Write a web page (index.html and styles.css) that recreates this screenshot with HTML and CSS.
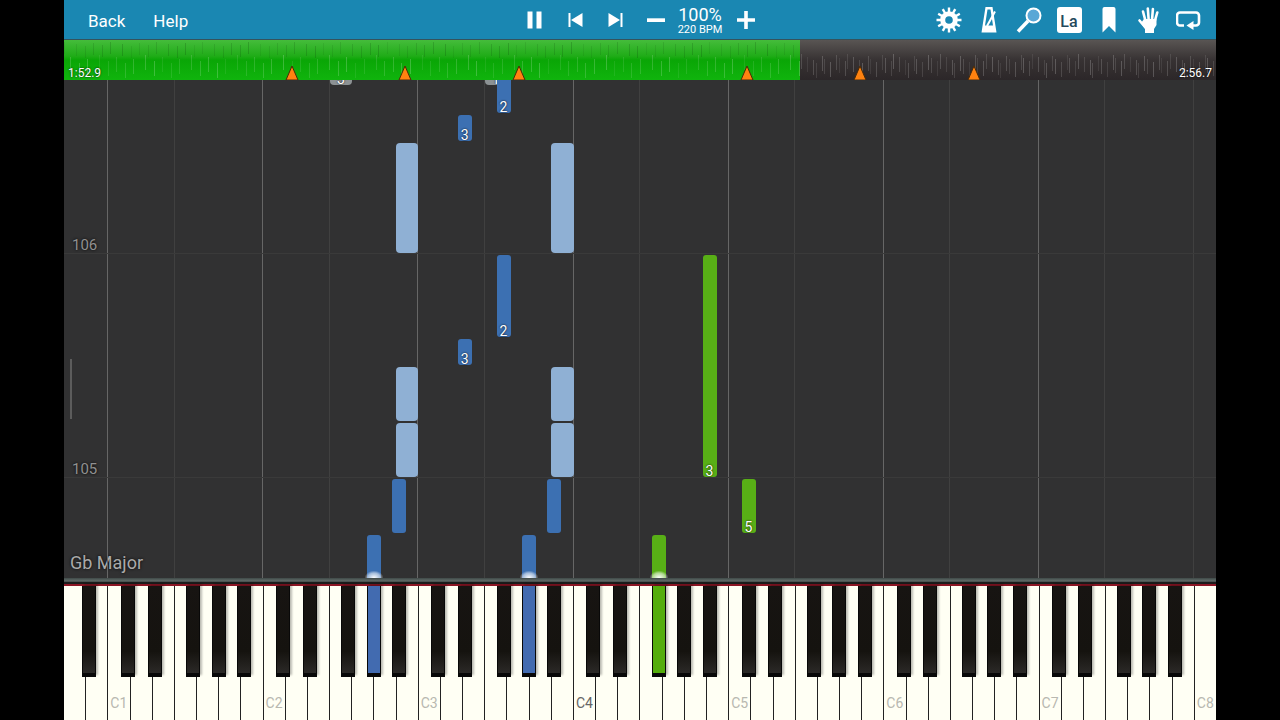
FILE: index.html
```html
<!DOCTYPE html>
<html lang="en">
<head>
  <meta charset="UTF-8">
  <meta name="viewport" content="width=device-width, initial-scale=1.0">
  <title>Piano Player</title>
  <link rel="stylesheet" href="styles.css">
</head>
<body>

<main class="app">
  <header class="toolbar">
    <nav class="menu">
      <button type="button" class="menu-button">Back</button>
      <button type="button" class="menu-button">Help</button>
    </nav>

    <div class="transport">
      <button type="button" class="icon-button" aria-label="Pause">
        <svg viewBox="0 0 24 24"><path d="M4.500 3.500h5v17h-5zM13.500 3.500h5v17h-5z"/></svg>
      </button>
      <button type="button" class="icon-button" aria-label="Previous">
        <svg viewBox="0 0 24 24"><path d="M5.500 5h2v14h-2zM19.500 5v14L8 12z"/></svg>
      </button>
      <button type="button" class="icon-button" aria-label="Next">
        <svg viewBox="0 0 24 24"><path d="M17.500 5h2v14h-2zM5.500 5v14L17 12z"/></svg>
      </button>
      <button type="button" class="icon-button" aria-label="Slower">
        <svg viewBox="0 0 24 24"><path d="M4 10.300h18v3.700H4z"/></svg>
      </button>
      <div class="tempo">
        <span class="tempo-percent">100%</span>
        <span class="tempo-bpm">220 BPM</span>
      </div>
      <button type="button" class="icon-button" aria-label="Faster">
        <svg viewBox="0 0 24 24"><path d="M11.200 3h3.600v7.200H22v3.600h-7.200V21h-3.600v-7.200H4v-3.600h7.200z"/></svg>
      </button>
    </div>

    <div class="tools">
      <button type="button" class="icon-button" aria-label="Settings">
        <svg class="large" viewBox="0 0 26 26">
          <circle cx="13" cy="13" r="6.300" fill="none" stroke="#fff" stroke-width="5"/>
          <g stroke="#fff" stroke-width="2.400">
            <path d="M13 .5v5M13 20.500v5M.5 13h5M20.500 13h5"/>
            <path d="M13 .5v5M13 20.500v5M.5 13h5M20.500 13h5" transform="rotate(30 13 13)"/>
            <path d="M13 .5v5M13 20.500v5M.5 13h5M20.500 13h5" transform="rotate(60 13 13)"/>
          </g>
        </svg>
      </button>
      <button type="button" class="icon-button" aria-label="Metronome">
        <svg class="large" viewBox="0 0 26 26">
          <path fill-rule="evenodd" d="M9.500 0h7l4 25.500h-15zM11.500 2.500 9 18.500h8L14.500 2.500z"/>
          <path d="M11 19 19 4.500" fill="none" stroke="#fff" stroke-width="2"/>
        </svg>
      </button>
      <button type="button" class="icon-button" aria-label="Zoom">
        <svg class="large" viewBox="0 0 26 26">
          <circle cx="17.500" cy="8.500" r="7" fill="#5aa7d6" stroke="#fff" stroke-width="2"/>
          <path d="M12 14 2 24.500" fill="none" stroke="#fff" stroke-width="3.500"/>
        </svg>
      </button>
      <button type="button" class="icon-button" aria-label="Note names"><span class="note-names">La</span></button>
      <button type="button" class="icon-button" aria-label="Bookmark">
        <svg class="large" viewBox="0 0 26 26"><path d="M8.500 0h9a2 2 0 0 1 2 2v23.500L13 19l-6.500 6.500V2a2 2 0 0 1 2-2z"/></svg>
      </button>
      <button type="button" class="icon-button" aria-label="Hands">
        <svg class="large" viewBox="0 0 26 26">
          <path d="M8 12h12.500v6L18 22v4H9v-4l-4-6z"/>
          <path d="M9.500 14 7 4.500M12.700 13l-.9-11.500M16 13l.9-11M18.800 14l2.500-8.500M9 20l-5.500-6.500" fill="none" stroke="#fff" stroke-width="2.600" stroke-linecap="round"/>
        </svg>
      </button>
      <button type="button" class="icon-button" aria-label="Loop">
        <svg class="large" viewBox="0 0 26 26">
          <path d="M8 18.500H4a3 3 0 0 1-3-3V8.500a3 3 0 0 1 3-3h16a3 3 0 0 1 3 3v7a3 3 0 0 1-3 3h-3" fill="none" stroke="#fff" stroke-width="2.600"/>
          <path d="M10.500 18.500 17.500 14v9z"/>
        </svg>
      </button>
    </div>
  </header>

  <section class="timeline" id="timeline">
    <div class="timeline-played"></div>
    <span class="time">1:52.9</span>
    <span class="time">2:56.7</span>
  </section>

  <section class="roll" id="roll">
    <div class="scroll-handle"></div>
    <span class="key-signature">Gb Major</span>
  </section>

  <div class="rail"></div>

  <section class="keyboard" id="keyboard"></section>
</main>

<script src="script.js"></script>
</body>
</html>
```

FILE: styles.css
```css
* {
  box-sizing: border-box;
}
body {
  margin: 0;
  background: #000;
  color: #fff;
  font-family: Roboto, "Liberation Sans", sans-serif;
}
button {
  margin: 0;
  padding: 0;
  border: none;
  background: none;
  color: inherit;
  font-family: inherit;
  cursor: pointer;
}
.app {
  display: flex;
  flex-direction: column;
  width: 90%;
  height: 100vh;
  margin: 0 auto;
  overflow: hidden;
}

/* Toolbar */
.toolbar {
  display: grid;
  grid-template-columns: 1fr auto 1fr;
  align-items: center;
  height: 40px;
  background: #1a87b2;
  border-bottom: 1px solid #35535c;
}
.menu {
  display: flex;
  gap: 12px;
  padding: 2px 0 0 16px;
}
.menu-button {
  height: 30px;
  padding: 0 8px;
  font-size: 17px;
  line-height: 20px;
}
.transport,
.tools {
  display: flex;
  align-items: center;
}
.tools {
  justify-content: flex-end;
  padding-right: 7px;
}
.icon-button {
  display: flex;
  align-items: center;
  justify-content: center;
  width: 40px;
  height: 38px;
}
.icon-button svg {
  width: 24px;
  height: 24px;
  fill: #fff;
}
.icon-button .large {
  width: 26px;
  height: 26px;
}
.tempo {
  display: flex;
  flex-direction: column;
  align-items: center;
  width: 50px;
  padding-top: 3px;
  white-space: nowrap;
}
.tempo-percent {
  font-size: 18px;
  line-height: 18px;
}
.tempo-bpm {
  font-size: 11px;
  line-height: 12px;
}
.note-names {
  width: 25px;
  height: 26px;
  border-radius: 3px;
  background: #fff;
  color: #24495c;
  font-size: 16px;
  font-weight: 500;
  line-height: 30px;
}

/* Timeline */
.timeline {
  position: relative;
  display: flex;
  align-items: flex-end;
  justify-content: space-between;
  height: 40px;
  padding: 0 4px;
  background: linear-gradient(#595553, #373233 50%, #2c2729);
}
.timeline-played {
  position: absolute;
  inset: 0 auto 0 0;
  background: linear-gradient(#45bc3b, #20ac18 40%, #0aa606 50%, #10b40d);
}
.tick {
  position: absolute;
  width: 1px;
  background: #fff;
}
.tick.high {
  background: #063806;
}
.marker {
  position: absolute;
  bottom: 0;
  width: 14px;
  height: 15px;
  margin-left: -7px;
}
.time {
  position: relative;
  font-size: 12px;
  line-height: 14px;
  text-shadow: 0 0 2px #000;
}

/* Falling notes */
.roll {
  position: relative;
  flex: 1;
  overflow: hidden;
  background: #313132;
}
.lane {
  position: absolute;
  top: 0;
  bottom: 0;
  width: 1px;
  margin-left: -1px;
  background: #404040;
}
.lane.octave {
  background: #666;
}
.measure {
  position: absolute;
  left: 0;
  right: 0;
  padding-left: 8px;
  border-bottom: 1px solid #3a3a3a;
  color: #909090;
  font-size: 15px;
  line-height: 16px;
  text-shadow: 0 0 3px #000;
}
.note {
  position: absolute;
  display: flex;
  align-items: flex-end;
  justify-content: center;
  border-radius: 3px;
  font-size: 14px;
  line-height: 12px;
  text-shadow: 0 0 2px #000;
}
.note.wide {
  border-radius: 4px;
}
.left {
  background: #3c70b2;
}
.left.wide {
  background: #8fb0d4;
}
.left.muted {
  background: #8c9294;
}
.right {
  background: #58af16;
}
.glow {
  position: absolute;
  bottom: 0;
  width: 18px;
  height: 7px;
  margin-left: -9px;
  background: radial-gradient(ellipse at bottom, #fff, #ffffff88 50%, #ffffff00 75%);
}
.scroll-handle {
  position: absolute;
  left: 6px;
  bottom: 159px;
  width: 2px;
  height: 60px;
  background: #5c5c5c;
}
.key-signature {
  position: absolute;
  left: 6px;
  bottom: 4px;
  color: #aaa;
  font-size: 18px;
  line-height: 22px;
  text-shadow: 0 0 3px #000;
}
.rail {
  height: 8px;
  background: linear-gradient(#3f4a48, #5c6664 40%, #4a5250 60%, #1c1c1c 70%);
  border-bottom: 2px solid #8c1524;
}

/* Keyboard */
.keyboard {
  position: relative;
  display: flex;
  height: 134px;
  background: #fffff4;
}
.white-key {
  display: flex;
  flex: 1 1 0;
  align-items: flex-end;
  min-width: 0;
  padding: 0 0 9px 2px;
  border-left: 1px solid #222;
  background: #fffff4;
  color: #b8b8b0;
  font-size: 14px;
  line-height: 16px;
}
.white-key:first-child {
  border-left: none;
}
.white-key.middle {
  color: #666;
}
.black-key {
  position: absolute;
  top: 0;
  height: 91px;
  background: linear-gradient(#171412, #15130f 75%, #2b2927);
  border: 1px solid #080808;
  border-width: 0 1px 4px;
  box-shadow: 2px -2px 2px #00000044;
}
.black-key.left {
  background: #426bb0;
}
.black-key.right {
  background: #54ad0c;
}
```

FILE: script.js
```javascript
const WHITE_KEYS = 52;
const BEAT = 56;          // pixels per beat
const FIRST_MEASURE = 100; // distance from the keys to measure 105
const NAMES = 'ABCDEFG';
const BLACK_WIDTH = 14 / 1152 * 100;

// How far each black key sits from the gap between its white keys
const SHIFT = { C: -0.1, D: 0.09, F: -0.16, G: -0.01, A: 0.14 };

const notes = [
  // key, start beat, length, hand, finger
  ['F2', 7, 1, 'left muted', '3'],
  ['F3', 7, 1, 'left muted', '1'],
  ['G#2', -2, 1, 'left', ''],
  ['G#3', -2, 1, 'left', ''],
  ['A#2', -1, 1, 'left', ''],
  ['A#3', -1, 1, 'left', ''],
  ['B2', 0, 1, 'left', ''],
  ['B3', 0, 1, 'left', ''],
  ['B2', 1, 1, 'left', ''],
  ['B3', 1, 1, 'left', ''],
  ['D#3', 2, 0.5, 'left', '3'],
  ['F#3', 2.5, 1.5, 'left', '2'],
  ['B2', 4, 2, 'left', ''],
  ['B3', 4, 2, 'left', ''],
  ['D#3', 6, 0.5, 'left', '3'],
  ['F#3', 6.5, 1.5, 'left', '2'],
  ['F#4', -2, 1, 'right', ''],
  ['C#5', -1, 1, 'right', '5'],
  ['A#4', 0, 4, 'right', '3']
];
const pressed = { 'G#2': 'left', 'G#3': 'left', 'F#4': 'right' };
const markers = [19.75, 29.6, 39.5, 59.3, 69.1, 79];
const played = 112.9 / 176.7 * 100;

const roll = document.getElementById('roll');
const keyboard = document.getElementById('keyboard');
const timeline = document.getElementById('timeline');

function add(parent, tag, className, style) {
  const element = document.createElement(tag);
  element.className = className;
  Object.assign(element.style, style);
  parent.appendChild(element);
  return element;
}

// The keyboard starts on A0 and the octave number changes on C
function keyName(index) {
  return NAMES[index % 7] + Math.floor((index + 5) / 7);
}

function keyPosition(name) {
  const octave = Number(name[name.length - 1]);
  const step = 'CDEFGAB'.indexOf(name[0]);
  const index = 2 + (octave - 1) * 7 + step;
  if (name.includes('#')) {
    const center = (index + 1 + SHIFT[name[0]]) / WHITE_KEYS * 100;
    return { left: center - BLACK_WIDTH / 2, width: BLACK_WIDTH, center: center };
  }
  return { left: index / WHITE_KEYS * 100, width: 100 / WHITE_KEYS };
}

// Keys and the lane lines above C and F
for (let i = 0; i < WHITE_KEYS; i++) {
  const name = keyName(i);
  const key = add(keyboard, 'button', 'white-key' + (name === 'C4' ? ' middle' : ''), {});
  key.type = 'button';
  key.setAttribute('aria-label', name);
  if (name[0] === 'C') {
    key.textContent = name;
  }
  if (name[0] === 'C' || name[0] === 'F') {
    const octave = name[0] === 'C' && name !== 'C8';
    add(roll, 'div', octave ? 'lane octave' : 'lane', { left: i / WHITE_KEYS * 100 + '%' });
  }
}
for (let i = 0; i < WHITE_KEYS - 1; i++) {
  const name = keyName(i);
  if (!(name[0] in SHIFT)) continue;
  const sharp = name[0] + '#' + name[1];
  const position = keyPosition(sharp);
  const key = add(keyboard, 'button', 'black-key ' + (pressed[sharp] || ''), {
    left: position.left + '%',
    width: position.width + '%'
  });
  key.type = 'button';
  key.setAttribute('aria-label', sharp);
}

// Measures
[105, 106].forEach(function(number, i) {
  const measure = add(roll, 'div', 'measure', { bottom: FIRST_MEASURE + i * 4 * BEAT + 'px' });
  measure.textContent = number;
});

// Notes
notes.forEach(function([name, start, length, hand, finger]) {
  const position = keyPosition(name);
  const wide = name.includes('#') ? '' : ' wide';
  const note = add(roll, 'div', 'note ' + hand + wide, {
    left: position.left + '%',
    width: position.width + '%',
    bottom: FIRST_MEASURE + start * BEAT + 1 + 'px',
    height: length * BEAT - 2 + 'px'
  });
  note.textContent = finger;
});
Object.keys(pressed).forEach(function(name) {
  add(roll, 'div', 'glow', { left: keyPosition(name).center + '%' });
});

// Timeline: dark ticks for the high part, light ticks for the low part
document.querySelector('.timeline-played').style.width = played + '%';
for (let i = 0; i < 250; i++) {
  const x = (i * 0.4 + (i * 7 % 5) * 0.06);
  const high = x < played && i % 2 === 0;
  add(timeline, 'div', high ? 'tick high' : 'tick', {
    left: x + '%',
    top: (high ? 2 + i % 5 : 14 + i * 3 % 10) + 'px',
    height: (high ? 12 : 15) + 'px',
    opacity: 0.08 + (i * 11 % 7) * 0.02
  });
}
markers.forEach(function(x) {
  const marker = add(timeline, 'div', 'marker', { left: x + '%' });
  marker.innerHTML = '<svg width="14" height="15" viewBox="0 0 14 15"><path d="M7 1 1 15h12z" fill="#ff8210" stroke="#4a2a08" stroke-width="1"/></svg>';
});
```
